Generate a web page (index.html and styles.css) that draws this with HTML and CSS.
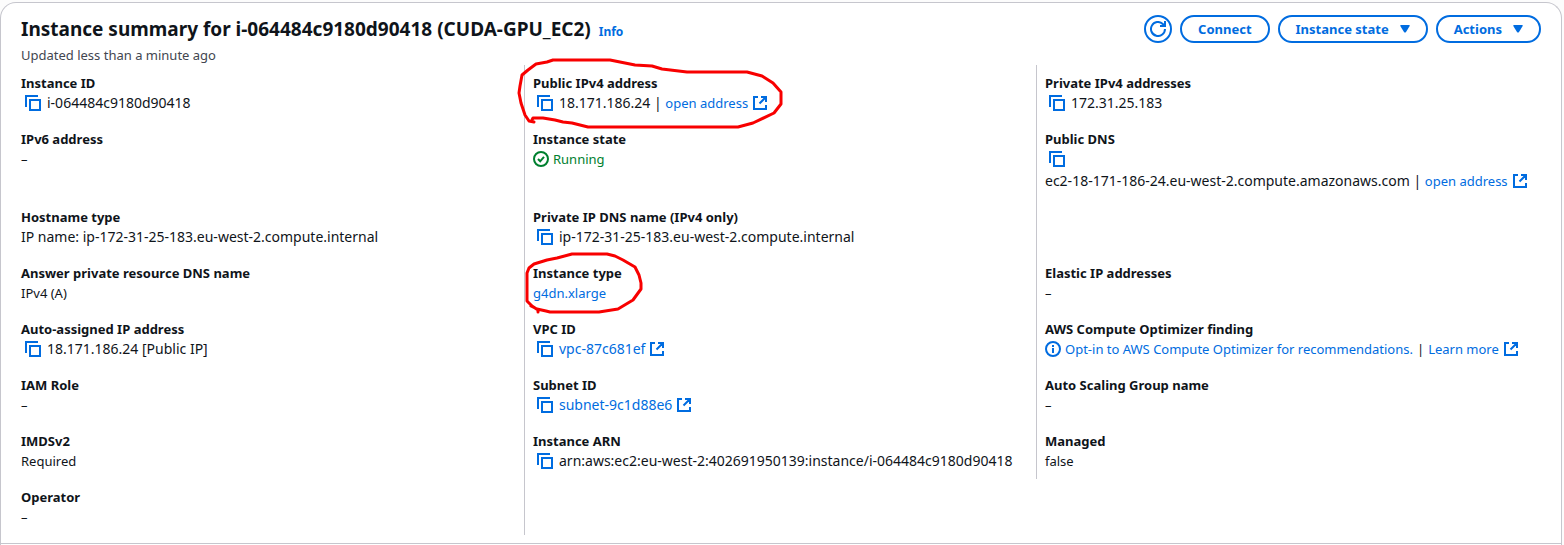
FILE: index.html
```
<!DOCTYPE html>
<html lang="en">
<head>
<meta charset="utf-8">
<title>Instance summary</title>
<link rel="stylesheet" href="styles.css">
</head>
<body>
<svg class="sprite" aria-hidden="true">
  <symbol id="copy" viewBox="0 0 16 16"><path d="M1 12V1h12M5 5h10v10H5z"/></symbol>
  <symbol id="external" viewBox="0 0 14 14"><path d="M5 1H1v12h12V9M8 1h5v5M13 1L6.500 7.500"/></symbol>
  <symbol id="check" viewBox="0 0 16 16"><circle cx="8" cy="8" r="7"/><path d="M5 8l2.200 2.300L11 5.800"/></symbol>
  <symbol id="info" viewBox="0 0 16 16"><circle cx="8" cy="8" r="7"/><path d="M8 4v2M8 7v5"/></symbol>
  <symbol id="refresh" viewBox="0 0 16 16"><path d="M15 8a7 7 0 1 1-2.200-5.100L15 5M15 0v5h-5"/></symbol>
  <symbol id="caret" viewBox="0 0 10 8"><path class="solid" d="M1 0h8q1.300 0 .7 1L6 7q-1 1.200-2 0L.3 1Q-.3 0 1 0z"/></symbol>
</svg>
<main class="card">
  <section class="summary">
    <header class="header">
      <div class="heading">
        <h1 class="title">Instance summary for i-064484c9180d90418 (CUDA-GPU_EC2) <a class="info" href="#">Info</a></h1>
        <p class="updated">Updated less than a minute ago</p>
      </div>
      <div class="actions">
        <button class="button round" aria-label="Refresh"><svg class="icon"><use href="#refresh"/></svg></button>
        <button class="button">Connect</button>
        <button class="button">Instance state<svg class="caret"><use href="#caret"/></svg></button>
        <button class="button">Actions<svg class="caret"><use href="#caret"/></svg></button>
      </div>
    </header>
    <dl class="grid">
      <div class="cell"><dt>Instance ID</dt><dd class="code"><button class="copy" aria-label="Copy instance ID"><svg class="icon"><use href="#copy"/></svg></button>i-064484c9180d90418</dd></div>
      <div class="cell"><dt>Public IPv4 address</dt><dd class="code"><button class="copy" aria-label="Copy public IPv4 address"><svg class="icon"><use href="#copy"/></svg></button>18.171.186.24 |&nbsp;<a class="words" href="#">open address<svg class="external"><use href="#external"/></svg></a></dd>
        <svg class="mark mark-address" viewBox="516 57 268 72" aria-hidden="true"><path d="M534 122l-5-1-4-6-4-12-2-10 1-7 2-11 6-5 8-6 11-2 6-2h57l15 3 10 2 17 1 10 3 25 3h60l15 4 11 7 8 9v12l-7 9-21 10-15 4H588l-8-2-8-2-9-1-8-2-12-2h-10l-1 2"/></svg>
      </div>
      <div class="cell"><dt>Private IPv4 addresses</dt><dd class="code"><button class="copy" aria-label="Copy private IPv4 address"><svg class="icon"><use href="#copy"/></svg></button>172.31.25.183</dd></div>

      <div class="cell"><dt>IPv6 address</dt><dd>–</dd></div>
      <div class="cell"><dt>Instance state</dt><dd class="running"><svg class="icon status"><use href="#check"/></svg>Running</dd></div>
      <div class="cell"><dt>Public DNS</dt><dd class="code stacked"><button class="copy" aria-label="Copy public DNS"><svg class="icon"><use href="#copy"/></svg></button><span class="line">ec2-18-171-186-24.eu-west-2.compute.amazonaws.com |&nbsp;<a class="words" href="#">open address<svg class="external"><use href="#external"/></svg></a></span></dd></div>

      <div class="cell"><dt>Hostname type</dt><dd class="code">IP name: ip-172-31-25-183.eu-west-2.compute.internal</dd></div>
      <div class="cell"><dt>Private IP DNS name (IPv4 only)</dt><dd class="code"><button class="copy" aria-label="Copy private IP DNS name"><svg class="icon"><use href="#copy"/></svg></button>ip-172-31-25-183.eu-west-2.compute.internal</dd></div>
      <div class="cell"></div>

      <div class="cell"><dt>Answer private resource DNS name</dt><dd>IPv4 (A)</dd></div>
      <div class="cell"><dt>Instance type</dt><dd><a href="#">g4dn.xlarge</a></dd>
        <svg class="mark mark-type" viewBox="524 251 120 64" aria-hidden="true"><path d="M538 312v-2l-6-4-5-5v-28l2-5 5-4 13-4 10-2 15-4h35l8 2 8 4 12 7 4 8 2 8v6l-8 11-15 9-19 3h-49l-4-1-9-2-6-3"/></svg>
      </div>
      <div class="cell"><dt>Elastic IP addresses</dt><dd>–</dd></div>

      <div class="cell"><dt>Auto-assigned IP address</dt><dd class="code"><button class="copy" aria-label="Copy auto-assigned IP address"><svg class="icon"><use href="#copy"/></svg></button>18.171.186.24 [Public IP]</dd></div>
      <div class="cell"><dt>VPC ID</dt><dd class="code"><button class="copy" aria-label="Copy VPC ID"><svg class="icon"><use href="#copy"/></svg></button><a href="#">vpc-87c681ef<svg class="external"><use href="#external"/></svg></a></dd></div>
      <div class="cell"><dt>AWS Compute Optimizer finding</dt><dd class="finding"><a href="#"><svg class="icon status"><use href="#info"/></svg>Opt-in to AWS Compute Optimizer for recommendations.</a><span>|</span><a href="#">Learn more<svg class="external"><use href="#external"/></svg></a></dd></div>

      <div class="cell"><dt>IAM Role</dt><dd>–</dd></div>
      <div class="cell"><dt>Subnet ID</dt><dd class="code"><button class="copy" aria-label="Copy subnet ID"><svg class="icon"><use href="#copy"/></svg></button><a href="#">subnet-9c1d88e6<svg class="external"><use href="#external"/></svg></a></dd></div>
      <div class="cell"><dt>Auto Scaling Group name</dt><dd>–</dd></div>

      <div class="cell"><dt>IMDSv2</dt><dd>Required</dd></div>
      <div class="cell"><dt>Instance ARN</dt><dd class="code"><button class="copy" aria-label="Copy instance ARN"><svg class="icon"><use href="#copy"/></svg></button>arn:aws:ec2:eu-west-2:402691950139:instance/i-064484c9180d90418</dd></div>
      <div class="cell"><dt>Managed</dt><dd>false</dd></div>

      <div class="cell"><dt>Operator</dt><dd>–</dd></div>
      <div class="cell"></div>
    </dl>
  </section>
</main>
</body>
</html>
```
FILE: styles.css
```
* { box-sizing: border-box; }
body {
  margin: 0;
  padding: 2px 2px 0 0;
  min-height: 100vh;
  display: flex;
  flex-direction: column;
  background: #fcfcfc;
  color: #0f141a;
  font: 13px/20px "Noto Sans", "Open Sans", sans-serif;
}
a { color: #006ce0; text-decoration: none; }
svg { fill: none; stroke: currentColor; stroke-width: 2; }
.sprite { position: absolute; width: 0; height: 0; }
.solid { fill: currentColor; stroke: none; }
.card {
  flex: 1;
  background: #fff;
  border: 1px solid #c6c6cd;
  border-bottom: 0;
  border-radius: 16px 16px 0 0;
}
.summary { border-bottom: 1px solid #c6c6cd; padding-bottom: 8px; }
.header {
  display: flex;
  justify-content: space-between;
  align-items: flex-start;
  padding: 12px 20px 0;
}
.title { margin: 0; font-size: 19px; line-height: 28px; font-weight: 700; }
.info { font-size: 12px; line-height: 16px; margin-left: 3px; }
.updated { margin: 2px 0 0; color: #424650; line-height: 20px; }
.actions { display: flex; gap: 8px; }
.button {
  display: flex;
  align-items: center;
  justify-content: center;
  gap: 11px;
  height: 28px;
  padding: 0 16px;
  border: 2px solid #006ce0;
  border-radius: 20px;
  background: #fff;
  color: #006ce0;
  font: inherit;
  font-weight: 700;
  white-space: nowrap;
}
.round { width: 28px; padding: 0; }
.icon { width: 16px; height: 16px; flex: none; }
.caret { width: 10px; height: 8px; }
.grid {
  display: grid;
  grid-template-columns: repeat(3, minmax(0, 1fr));
  margin: 0;
  padding: 0 13px 0 11px;
}
.cell { position: relative; padding: 8px 0 8px 8px; border-left: 1px solid #c6c6cd; }
.cell:nth-child(3n + 1) { border-color: transparent; }
dt { font-weight: 700; }
dd { margin: 0; display: flex; align-items: center; white-space: nowrap; }
dd a, .line { display: inline-flex; align-items: center; }
.code { font-size: 14px; }
.words { font-size: 13px; }
.copy {
  display: flex;
  margin: 0 6px 0 4px;
  padding: 0;
  border: 0;
  background: none;
  color: #006ce0;
}
.external { width: 14px; height: 14px; margin-left: 5px; }
.status { margin-right: 4px; }
.running { color: #00802f; }
.finding { gap: 4px; }
.stacked { flex-direction: column; align-items: flex-start; gap: 4px; padding-top: 2px; }
.mark { position: absolute; z-index: 1; stroke: #f80000; stroke-width: 3; stroke-linejoin: round; stroke-linecap: round; pointer-events: none; }
.mark-address { left: -9px; top: -8px; width: 268px; height: 72px; }
.mark-type { left: -1px; top: -4px; width: 120px; height: 64px; }
```
